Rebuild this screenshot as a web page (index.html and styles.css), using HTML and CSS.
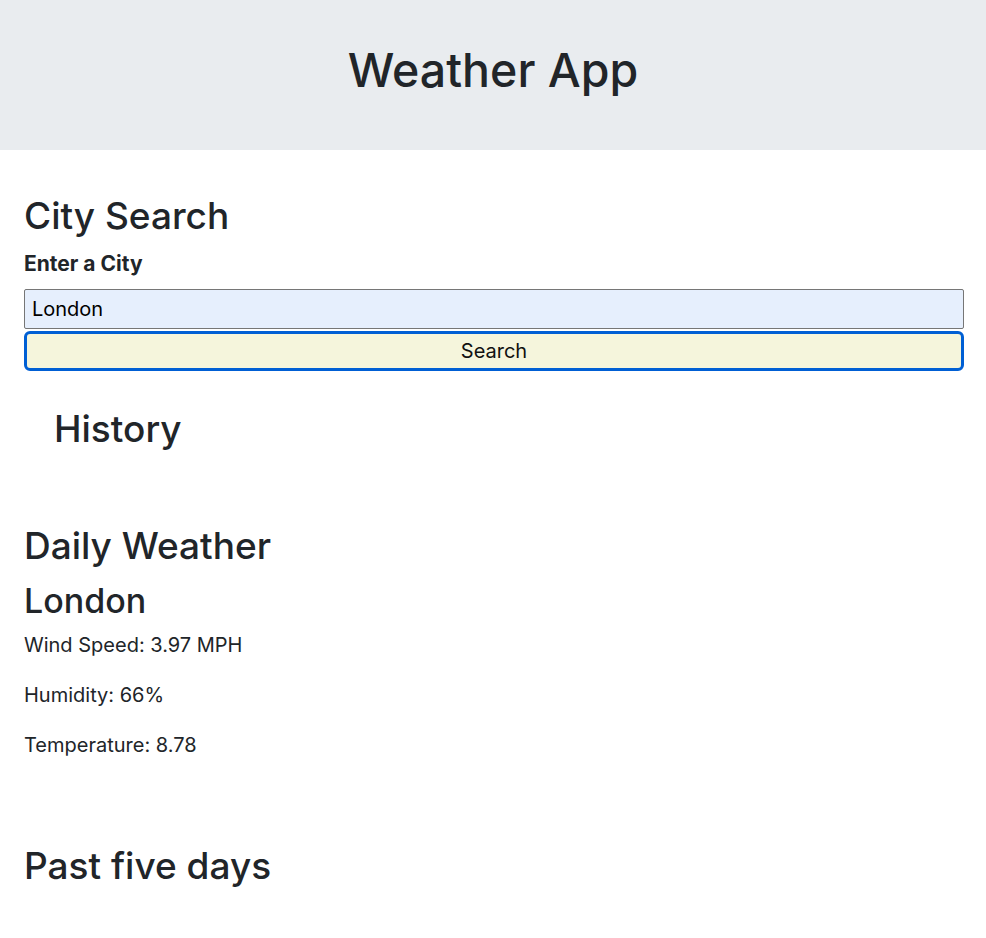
FILE: index.html
```html
<!DOCTYPE html>
<html lang="en">
<head>
<meta charset="utf-8">
<title>Weather App</title>
<link rel="stylesheet" href="styles.css">
</head>
<body>
<header class="hero">
  <h1 class="hero-title">Weather App</h1>
</header>
<main class="content">
  <section class="search">
    <h2 class="heading">City Search</h2>
    <label class="label" for="city">Enter a City</label>
    <input class="city-input" id="city" type="text" value="London">
    <button class="search-btn" type="button">Search</button>
  </section>
  <section class="history">
    <h2 class="heading">History</h2>
  </section>
  <section class="daily">
    <h2 class="heading">Daily Weather</h2>
    <h3 class="city-name">London</h3>
    <p class="stat">Wind Speed: 3.97 MPH</p>
    <p class="stat">Humidity: 66%</p>
    <p class="stat">Temperature: 8.78</p>
  </section>
  <section class="past">
    <h2 class="heading">Past five days</h2>
  </section>
</main>
</body>
</html>
```
FILE: styles.css
```css
html, body {
  margin: 0;
  padding: 0;
  background: #fff;
  color: #212529;
  font-family: Inter, "Noto Sans", sans-serif;
}
.hero {
  background: #e9ecef;
  height: 150px;
  box-sizing: border-box;
  padding-top: 40px;
}
.hero-title {
  margin: 0;
  text-align: center;
  font-size: 46.5px;
  line-height: 60px;
  font-weight: 500;
}
.content {
  padding: 42px 22px 40px 24px;
}
.heading {
  margin: 0;
  font-size: 37px;
  line-height: 48px;
  font-weight: 500;
}
.search {
  display: flex;
  flex-direction: column;
}
.label {
  margin-top: 9px;
  font-size: 21px;
  line-height: 30px;
  font-weight: 700;
}
.city-input {
  margin-top: 10px;
  height: 40px;
  box-sizing: border-box;
  border: 1px solid #767676;
  border-radius: 2px;
  background: #e6effd;
  font-family: Inter, "Noto Sans", sans-serif;
  font-size: 20px;
  color: #000;
  padding: 0 7px;
}
.search-btn {
  margin-top: 2px;
  height: 40px;
  box-sizing: border-box;
  border: 3px solid #005fd4;
  border-radius: 6px;
  background: #f5f5dc;
  font-family: Inter, "Noto Sans", sans-serif;
  font-size: 20px;
  color: #111;
}
.history {
  margin-top: 34px;
  padding-left: 30px;
}
.daily {
  margin-top: 69px;
}
.city-name {
  margin: 10px 0 8px;
  font-size: 34px;
  line-height: 42px;
  font-weight: 500;
}
.stat {
  margin: 0 0 20px;
  font-size: 20px;
  line-height: 30px;
}
.past {
  margin-top: 82px;
}
```
